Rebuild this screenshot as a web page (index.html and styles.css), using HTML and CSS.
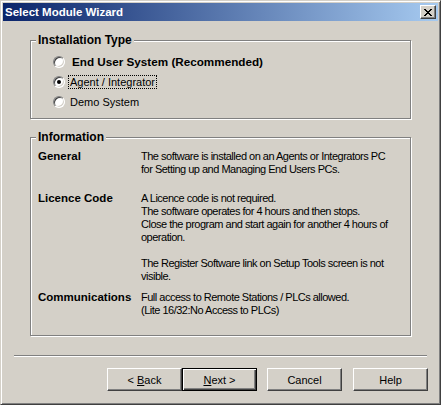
FILE: index.html
```html
<!DOCTYPE html>
<html lang="en">
<head>
  <meta charset="UTF-8">
  <title>Select Module Wizard</title>
  <link rel="stylesheet" href="styles.css">
</head>
<body>

  <div class="window">
    <div class="titlebar">
      <span class="title">Select Module Wizard</span>
      <button class="close-btn" aria-label="Close">
        <svg width="8" height="7" viewBox="0 0 8 7" shape-rendering="crispEdges">
          <path d="M0 0h2v1h-2zM6 0h2v1h-2zM1 1h2v1h-2zM5 1h2v1h-2zM2 2h4v1h-4zM3 3h2v1h-2zM2 4h4v1h-4zM1 5h2v1h-2zM5 5h2v1h-2zM0 6h2v1h-2zM6 6h2v1h-2z" fill="#000"/>
        </svg>
      </button>
    </div>

    <div class="content">
      <fieldset class="group group-install">
        <legend>Installation Type</legend>
        <div class="options">
          <label class="radio big">
            <span class="radio-dot"></span>
            <span class="radio-text">End User System (Recommended)</span>
          </label>
          <label class="radio checked">
            <span class="radio-dot"></span>
            <span class="radio-text focus">Agent / Integrator</span>
          </label>
          <label class="radio">
            <span class="radio-dot"></span>
            <span class="radio-text">Demo System</span>
          </label>
        </div>
      </fieldset>

      <fieldset class="group group-info">
        <legend>Information</legend>
        <div class="info">
          <div class="row">
            <div class="label">General</div>
            <div class="value">
              The software is installed on an Agents or Integrators PC<br>
              for Setting up and Managing End Users PCs.
            </div>
          </div>
          <div class="row row-licence">
            <div class="label">Licence Code</div>
            <div class="value">
              <p>A Licence code is not required.<br>
              The software operates for 4 hours and then stops.<br>
              Close the program and start again for another 4 hours of<br>
              operation.</p>
              <p>The Register Software link on Setup Tools screen is not<br>
              visible.</p>
            </div>
          </div>
          <div class="row row-comms">
            <div class="label">Communications</div>
            <div class="value">
              Full access to Remote Stations / PLCs allowed.<br>
              (Lite 16/32:No Access to PLCs)
            </div>
          </div>
        </div>
      </fieldset>

      <div class="separator"></div>

      <div class="buttons">
        <button class="btn">&lt; <u>B</u>ack</button>
        <button class="btn default"><u>N</u>ext &gt;</button>
        <button class="btn cancel">Cancel</button>
        <button class="btn help">Help</button>
      </div>
    </div>
  </div>

</body>
</html>
```

FILE: styles.css
```css
body {
  margin: 0;
  background: #d4d0c8;
  font-family: "Liberation Sans", Arial, sans-serif;
  font-size: 11px;
  color: #000;
}

.window {
  width: 441px;
  height: 405px;
  box-sizing: border-box;
  padding: 2px;
  border: 1px solid;
  border-color: #d4d0c8 #404040 #404040 #d4d0c8;
  box-shadow: inset 1px 1px #fff, inset -1px -1px #808080;
  display: flex;
  flex-direction: column;
}

.titlebar {
  height: 18px;
  padding: 0 2px;
  display: flex;
  align-items: center;
  justify-content: space-between;
  background: linear-gradient(to right, #0a246a, #a6caf0);
  color: #fff;
  font-weight: bold;
  font-size: 11.5px;
}

.close-btn {
  width: 16px;
  height: 14px;
  box-sizing: border-box;
  padding: 0;
  background: #d4d0c8;
  border: 1px solid;
  border-color: #fff #404040 #404040 #fff;
  box-shadow: inset -1px -1px #808080;
  display: flex;
  align-items: center;
  justify-content: center;
}

.content {
  flex: 1;
  padding-top: 12px;
}

.group {
  margin: 0 27px;
  padding: 0;
  min-width: 0;
  border: 1px solid #808080;
  box-shadow: inset 1px 1px #fff, 1px 1px #fff;
}

.group legend {
  margin-left: 5px;
  padding: 0 2px;
  background: #d4d0c8;
  font-weight: bold;
  font-size: 12px;
  line-height: 14px;
}

.group-info {
  margin-top: 11px;
}

/* radio options */
.options {
  padding: 5px 0 6px 22px;
}

.radio {
  height: 20px;
  display: flex;
  align-items: center;
}

.radio-dot {
  width: 12px;
  height: 12px;
  box-sizing: border-box;
  border-radius: 50%;
  border: 1px solid;
  border-color: #808080 #fff #fff #808080;
  box-shadow: inset 1px 1px #404040, inset -1px -1px #d4d0c8;
  background: #fff;
  position: relative;
  flex: none;
}

.radio.checked .radio-dot::after {
  content: "";
  position: absolute;
  left: 3px;
  top: 3px;
  width: 4px;
  height: 4px;
  border-radius: 50%;
  background: #000;
}

.radio-text {
  margin-left: 3px;
  padding: 0 1px;
  line-height: 12px;
  border: 1px dotted transparent;
}

.radio-text.focus {
  border-color: #000;
}

.radio.big .radio-text {
  font-weight: bold;
  font-size: 11.7px;
  margin-left: 5px;
}

/* information rows */
.info {
  padding: 6px 0 18px 7px;
}

.row {
  display: grid;
  grid-template-columns: 103px 1fr;
  line-height: 13px;
}

.row-licence {
  margin-top: 16px;
}

.row-comms {
  margin-top: 8px;
}

.label {
  font-weight: bold;
  font-size: 11.5px;
}

.value {
  letter-spacing: -0.5px;
  white-space: nowrap;
}

.value p {
  margin: 0 0 13px;
}

.value p:last-child {
  margin-bottom: 0;
}

.separator {
  margin: 19px 11px 0;
  border-top: 1px solid #808080;
  border-bottom: 1px solid #fff;
}

.buttons {
  display: flex;
  justify-content: flex-end;
  padding: 11px 10px 0;
}

.btn {
  width: 75px;
  height: 23px;
  box-sizing: border-box;
  padding: 0;
  font-family: "Liberation Sans", Arial, sans-serif;
  font-size: 11px;
  color: #000;
  background: #d4d0c8;
  border: 1px solid;
  border-color: #fff #404040 #404040 #fff;
  box-shadow: inset -1px -1px #808080;
}

.btn.default {
  border-color: #000;
  box-shadow: inset 1px 1px #fff, inset -1px -1px #404040, inset -2px -2px #808080;
}

.btn.cancel {
  margin-left: 10px;
}

.btn.help {
  margin-left: 11px;
}
```
